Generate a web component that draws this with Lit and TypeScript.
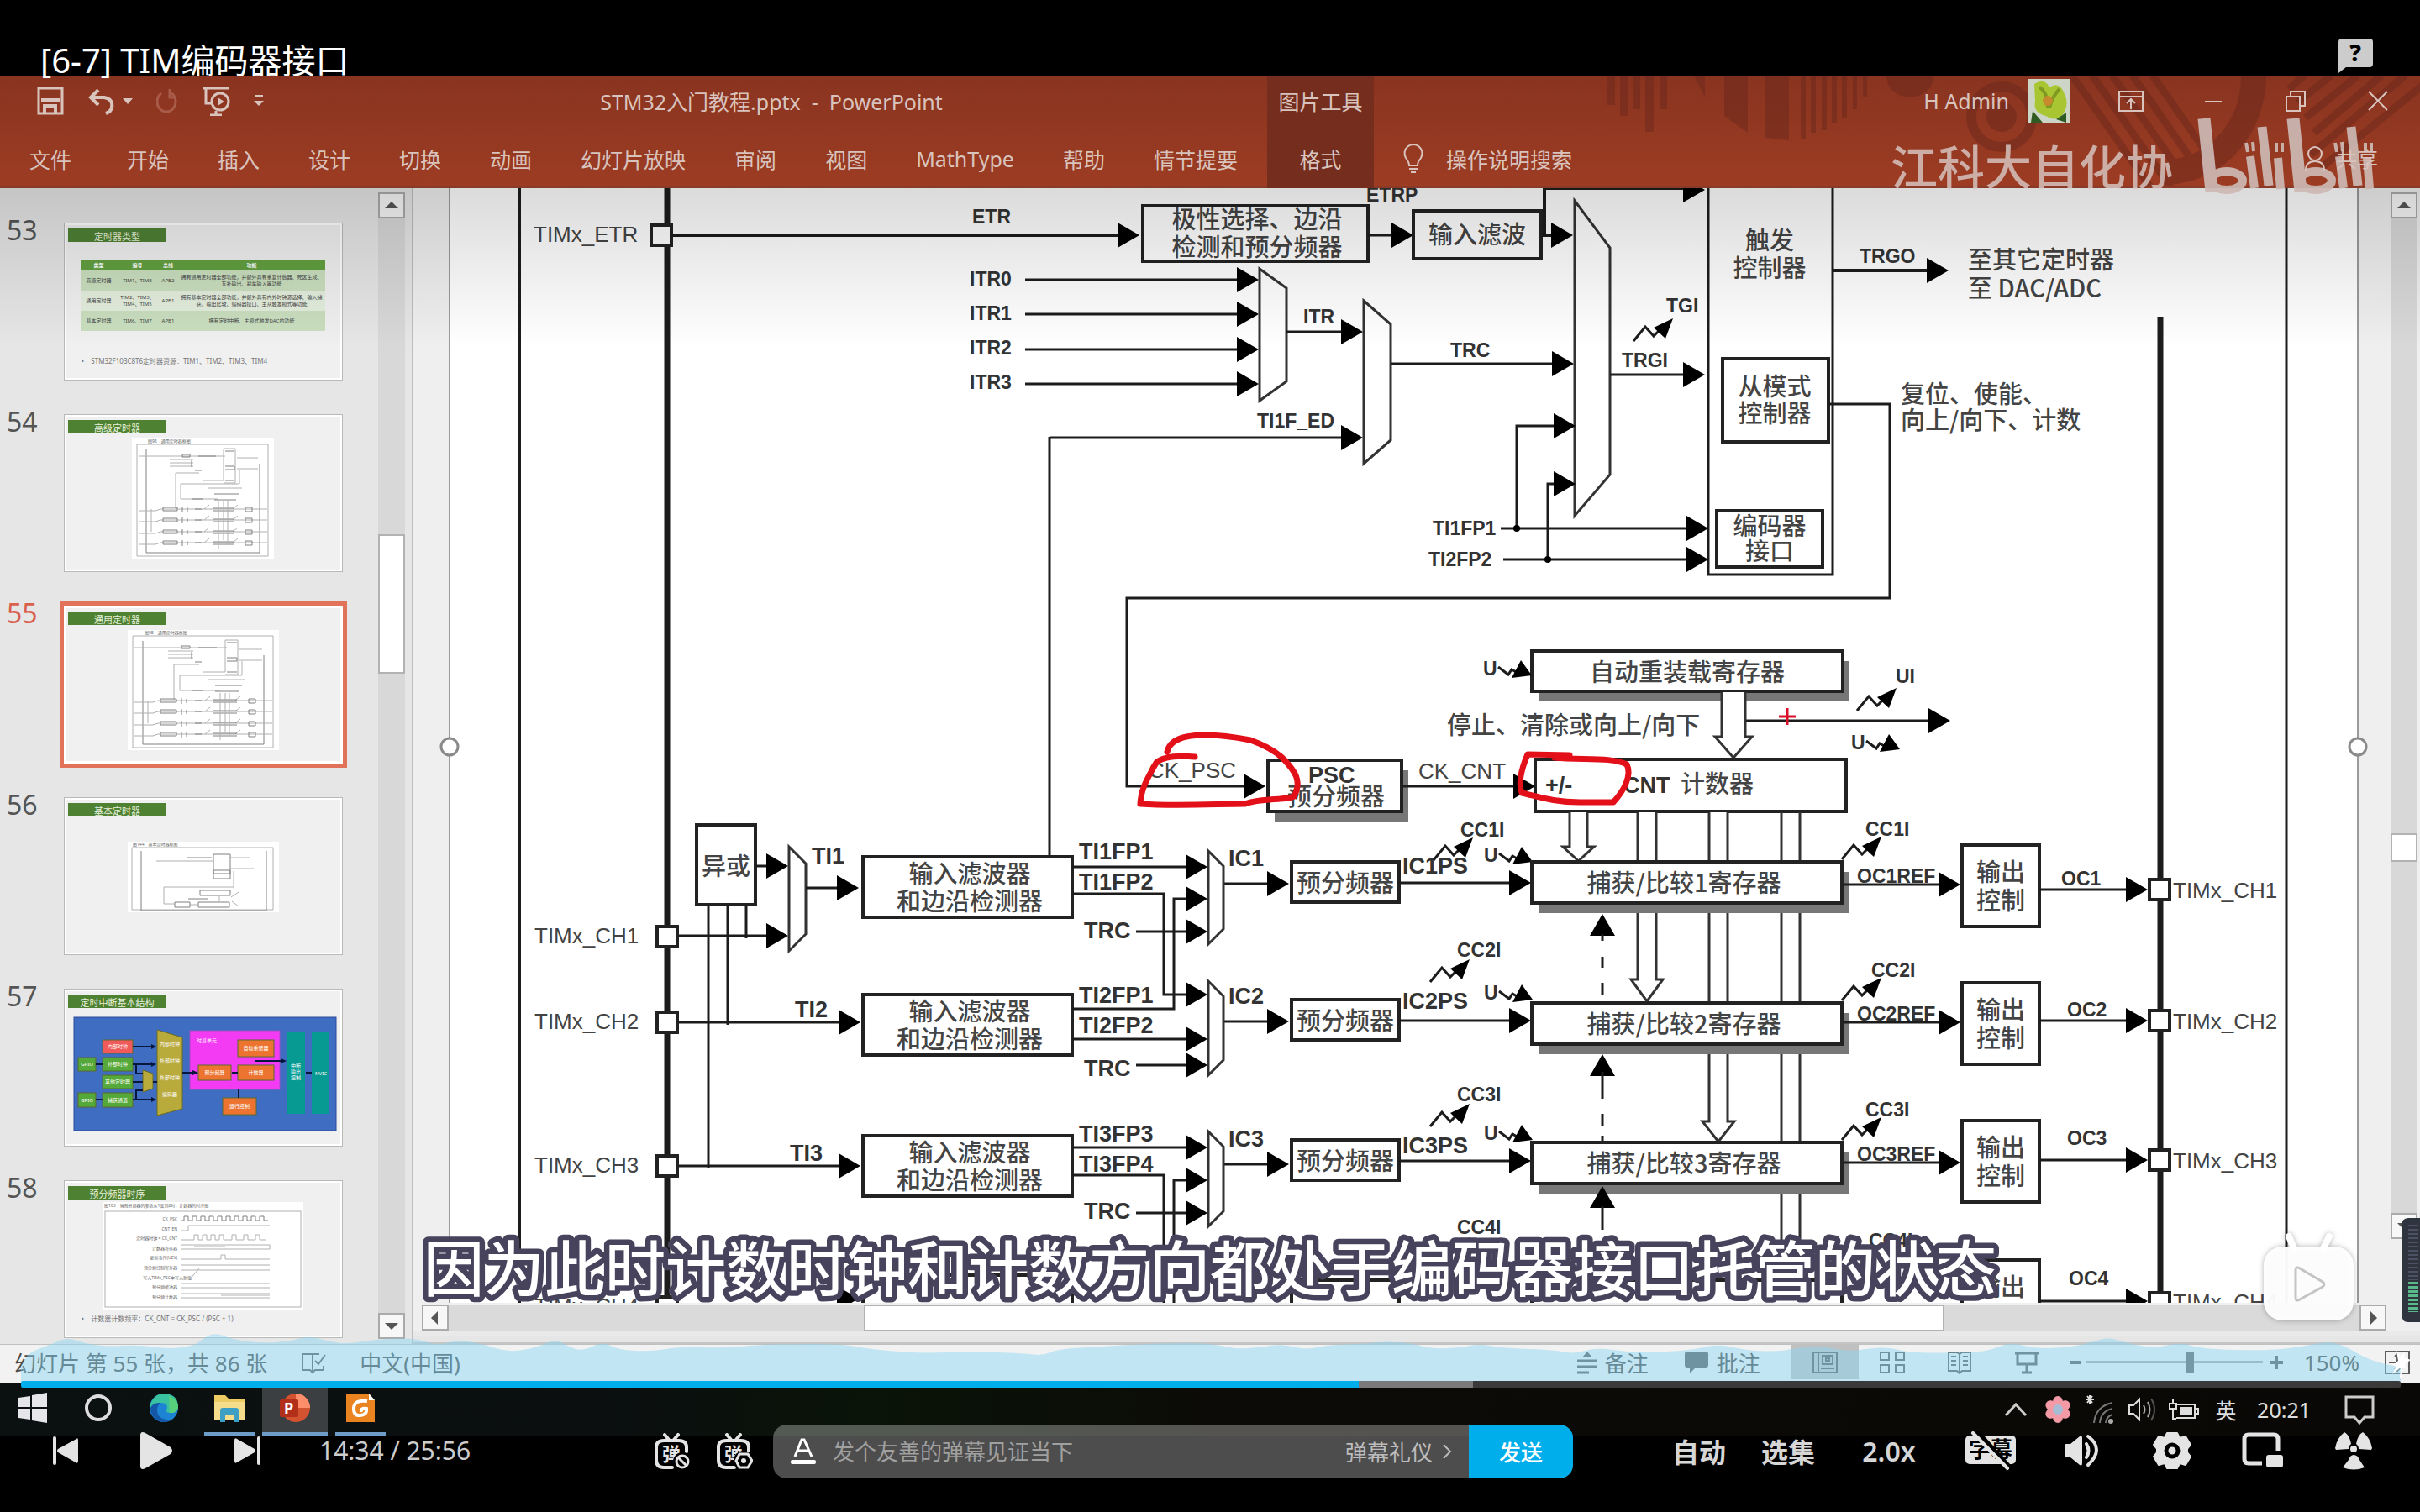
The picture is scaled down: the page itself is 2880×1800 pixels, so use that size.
import { LitElement, html, svg, css } from "lit";
import { customElement } from "lit/decorators.js";

/* ---------- drawing helpers for the timer block diagram ---------- */

const line = (d: string, w = 3) => svg`<path class="ln" d=${d} stroke-width=${w}></path>`;
const head = (x: number, y: number) =>
  svg`<path d=${`M${x} ${y}L${x - 26} ${y - 15}V${y + 15}Z`}></path>`;
const arrow = (x1: number, y: number, x2: number, w = 3) => svg`${line(`M${x1} ${y}H${x2 - 10}`, w)}${head(x2, y)}`;
const box = (x1: number, y1: number, x2: number, y2: number) =>
  svg`<rect class="bx" x=${x1} y=${y1} width=${x2 - x1} height=${y2 - y1}></rect>`;
const shadow = (x1: number, y1: number, x2: number, y2: number) =>
  svg`<rect class="sh" x=${x1 + 8} y=${y1 + 12} width=${x2 - x1} height=${y2 - y1}></rect>${box(x1, y1, x2, y2)}`;
const mux = (x: number, y1: number, y2: number, w: number, cut: number, cut2 = cut) =>
  svg`<path class="mx" d=${`M${x} ${y1}L${x + w} ${y1 + cut}V${y2 - cut2}L${x} ${y2}Z`}></path>`;
const t = (x: number, cy: number, s: string, c = "s") =>
  svg`<text class=${c} x=${x} y=${cy + (c === "b" ? 10 : c === "r" ? 9 : c === "s" ? 8 : 10)}>${s}</text>`;
const cj = (x: number, cy: number, s: string) => svg`<text class="c" x=${x} y=${cy + 10}>${s}</text>`;
const cm = (x: number, cy: number, s: string) => svg`<text class="c mid" x=${x} y=${cy + 10}>${s}</text>`;
const zig = (x: number, y: number) =>
  svg`${line(`M${x} ${y}L${x + 14} ${y - 17}L${x + 24} ${y - 6}L${x + 36} ${y - 18}`)}<path d=${`M${x + 47} ${y - 27}L${x + 24} ${y - 16}L${x + 38} ${y - 3}Z`}></path>`;
const update = (x: number, y: number) =>
  svg`${t(x, y, "U")}${line(`M${x + 18} ${y - 2}L${x + 30} ${y + 7}L${x + 34} ${y + 1}L${x + 46} ${y + 8}`)}<path d=${`M${x + 58} ${y + 8}L${x + 45} ${y - 10}L${x + 34} ${y + 11}Z`}></path>`;
const pin = (x: number, y: number) => svg`<rect class="bx" x=${x - 12} y=${y - 12} width="24" height="24"></rect>`;
const block = (x1: number, x2: number, y1: number, y2: number, tip: number) => {
  const m = (x1 + x2) / 2;
  return svg`<path class="mx" d=${`M${x1} ${y1}V${y2}H${x1 - 8}L${m} ${tip}L${x2 + 8} ${y2}H${x2}V${y1}`}></path>`;
};

const ROWS = [
  { n: 1, y: 1052, out: 1059, box: 1020, fp: ["TI1FP1", "TI1FP2"], fy: 1013, ps: 1026, psT: 1030, reg: 1026, ccl: 988, ox: 1006 },
  { n: 2, y: 1216, out: 1215, box: 1184, fp: ["TI2FP1", "TI2FP2"], fy: 1184, ps: 1190, psT: 1191, reg: 1194, ccl: 1131, ox: 1170 },
  { n: 3, y: 1386, out: 1381, box: 1352, fp: ["TI3FP3", "TI3FP4"], fy: 1349, ps: 1357, psT: 1363, reg: 1360, ccl: 1303, ox: 1334 },
];

const diagram = () => svg`
  <rect x="535" y="200" width="2271" height="1360" fill="#fff"></rect>
  <path d="M535 200V1560M2806 200V1560" stroke="#9b9b9b" stroke-width="2"></path>
  ${line("M618 200V1560", 4)}${line("M2721 200V1560", 3)}
  ${line("M794 200V1560", 7)}${line("M2571 377V1560", 7)}

  ${pin(787, 280)}${t(635, 279, "TIMx_ETR", "r")}${arrow(799, 280, 1356, 4)}${t(1157, 258, "ETR")}
  ${box(1360, 245, 1628, 311)}${cm(1496, 262, "极性选择、边沿")}${cm(1496, 295, "检测和预分频器")}
  ${arrow(1628, 280, 1682)}${t(1626, 232, "ETRP")}
  ${box(1682, 251, 1834, 308)}${cm(1758, 280, "输入滤波")}
  ${line("M1834 280H1860M1838 280V224H2010", 4)}${head(1872, 280)}${head(2029, 226)}
  ${[0, 1, 2, 3].map((i) => svg`${t(1154, 332 + i * 41, `ITR${i}`)}${arrow(1220, 333 + Math.round(i * 41.3), 1498)}`)}
  ${mux(1499, 320, 477, 32, 23)}${arrow(1531, 395, 1622)}${t(1551, 377, "ITR")}
  ${t(1496, 501, "TI1F_ED")}${arrow(1249, 521, 1622)}${line("M1249 520V1020")}
  ${mux(1623, 358, 552, 32, 28)}${arrow(1655, 433, 1873)}${t(1726, 417, "TRC")}
  ${mux(1874, 239, 614, 42, 56, 49)}${arrow(1916, 446, 2029)}${t(1930, 429, "TRGI")}${t(1983, 364, "TGI")}${zig(1944, 406)}
  ${line("M2033 200V684H2181V200")}${cm(2106, 287, "触发")}${cm(2106, 320, "控制器")}
  ${arrow(2181, 322, 2319, 4)}${t(2213, 305, "TRGO")}${cj(2342, 310, "至其它定时器")}${cj(2342, 344, "至 DAC/ADC")}
  ${box(2050, 427, 2176, 526)}${cm(2112, 461, "从模式")}${cm(2112, 493, "控制器")}
  ${line("M2176 481H2249V712H1341V936H1490")}${head(1506, 936)}
  ${cj(2262, 470, "复位、使能、")}${cj(2262, 501, "向上/向下、计数")}
  ${line("M1805 629V507H1860M1842 666V576H1860")}${head(1875, 507)}${head(1875, 576)}
  ${t(1705, 629, "TI1FP1")}${arrow(1786, 629, 2033)}${t(1700, 666, "TI2FP2")}${arrow(1789, 666, 2033)}
  <circle cx="1805" cy="629" r="4"></circle><circle cx="1842" cy="666" r="4"></circle>
  ${box(2043, 608, 2169, 675)}${cm(2106, 627, "编码器")}${cm(2106, 657, "接口")}

  ${shadow(1823, 775, 2193, 823)}${cm(2008, 801, "自动重装载寄存器")}${update(1765, 796)}
  ${block(2049, 2077, 824, 877, 902)}${arrow(2078, 858, 2321)}${t(2256, 805, "UI")}${zig(2210, 846)}${update(2203, 884)}
  ${cj(1722, 864, "停止、清除或向上/向下")}
  ${t(1367, 917, "CK_PSC", "r")}${shadow(1509, 905, 1668, 966)}${t(1557, 922, "PSC", "b")}${cm(1590, 949, "预分频器")}
  ${t(1688, 918, "CK_CNT", "r")}${arrow(1669, 936, 1827)}
  ${box(1827, 904, 2197, 966)}${t(1839, 934, "+/-", "b")}${t(1932, 934, "CNT", "b")}${cj(2000, 934, "计数器")}

  ${block(1868, 1889, 967, 1008, 1025)}
  ${block(1949, 1971, 967, 1166, 1192)}
  ${block(2034, 2056, 967, 1335, 1359)}
  <path class="mx" d="M2120 967V1560M2142 967V1560"></path>

  ${box(829, 982, 899, 1077)}${cm(864, 1032, "异或")}
  ${line("M843 1077V1391M866 1077V1220M888 1077V1117")}
  ${arrow(899, 1031, 938)}${arrow(806, 1114, 938)}${mux(939, 1008, 1132, 20, 20)}${t(966, 1018, "TI1", "b")}${arrow(959, 1057, 1022)}
  ${arrow(806, 1217, 1024)}${t(946, 1201, "TI2", "b")}
  ${arrow(806, 1388, 1024)}${t(940, 1372, "TI3", "b")}
  ${[1115, 1217, 1388, 1556].map((y, i) => svg`${pin(794, y)}${t(636, y - 1, `TIMx_CH${i + 1}`, "r")}`)}

  ${ROWS.map(
    (r) => svg`
      ${box(1027, r.box, 1276, r.box + 72)}${cm(1154, r.box + 21, "输入滤波器")}${cm(1154, r.box + 54, "和边沿检测器")}
      ${t(1284, r.fy, r.fp[0], "b")}${t(1284, r.fy + 36, r.fp[1], "b")}
      ${t(1290, r.y + 55, "TRC", "b")}
      ${t(1462, r.y - 31, `IC${r.n}`, "b")}${arrow(1456, r.y, 1534)}
      ${box(1537, r.ps, 1665, r.ps + 48)}${cm(1601, r.ps + 26, "预分频器")}
      ${t(1669, r.psT, `IC${r.n}PS`, "b")}${arrow(1665, r.ps + 25, 1822)}${update(1766, r.ps - 8)}
      ${t(r.n === 1 ? 1738 : 1734, r.ccl, `CC${r.n}I`)}${zig(r.n === 1 ? 1706 : 1702, r.n === 1 ? 1024 : r.ccl + 38)}
      ${shadow(1823, r.reg, 2192, r.reg + 49)}${cm(2004, r.reg + 26, `捕获/比较${r.n}寄存器`)}
      ${t(r.n === 2 ? 2227 : 2220, r.reg - 39, `CC${r.n}I`)}${zig(2192, r.reg - 3)}
      ${t(2210, r.ps + 17, `OC${r.n}REF`)}${arrow(2193, r.ps + 27, 2333)}
      ${box(2335, r.ox, 2427, r.ox + 97)}${cm(2381, r.ox + 33, "输出")}${cm(2381, r.ox + 67, "控制")}
      ${t(r.n === 1 ? 2453 : 2460, r.n === 3 ? 1355 : r.out - 13, `OC${r.n}`)}${arrow(2427, r.out, 2556)}
      ${pin(2570, r.out)}${t(2586, r.out + 1, `TIMx_CH${r.n}`, "r")}`
  )}
  ${arrow(1276, 1032, 1437)}${line("M1276 1064H1385V1184H1420")}${head(1437, 1184)}
  ${line("M1276 1201H1397V1070H1420")}${head(1437, 1070)}${arrow(1352, 1109, 1437)}
  ${arrow(1276, 1237, 1437)}${arrow(1352, 1268, 1437)}
  ${arrow(1276, 1366, 1437)}${line("M1276 1399H1385V1560M1397 1560V1405H1420")}${head(1437, 1405)}${arrow(1352, 1444, 1437)}
  ${mux(1438, 1013, 1124, 18, 18)}${mux(1438, 1168, 1280, 18, 18)}${mux(1438, 1347, 1460, 18, 18)}
  <path d="M1907 1088L1892 1114H1922ZM1907 1255L1892 1281H1922ZM1907 1412L1892 1438H1922Z"></path>
  ${line("M1907 1112V1120M1907 1139V1152M1907 1170V1184M1907 1276V1308M1907 1326V1340M1907 1352V1360M1907 1436V1464")}

  ${t(1734, 1461, "CC4I")}${zig(1702, 1500)}${t(2224, 1477, "CC4I")}
  ${box(1027, 1518, 1276, 1590)}${box(1537, 1524, 1665, 1572)}${box(1823, 1524, 2192, 1572)}
  ${head(1022, 1546)}${box(2335, 1500, 2427, 1597)}${cm(2381, 1533, "输出")}${t(2462, 1522, "OC4")}${arrow(2427, 1549, 2556)}
  ${pin(2570, 1551)}${t(2586, 1550, "TIMx_CH4", "r")}

  <path class="ink" d="M1422 901C1400 899 1384 901 1376 908C1366 926 1358 938 1357 957C1400 960 1450 957 1482 957C1500 950 1530 953 1540 948C1550 930 1541 918 1528 904C1516 892 1502 886 1488 881C1462 876 1432 873 1412 877C1398 880 1391 886 1389 895"></path>
  <path class="ink" d="M1868 899L1818 898C1812 912 1806 930 1811 944C1830 948 1848 955 1880 955H1920C1934 940 1942 922 1936 910C1918 901 1885 905 1850 902"></path>
  <path d="M2127 843V863M2117 853H2137" stroke="#d8102a" stroke-width="3"></path>
  <circle class="grip" cx="535" cy="889" r="10"></circle><circle class="grip" cx="2806" cy="889" r="10"></circle>
`;

/* ---------- slide thumbnails ---------- */

const miniTimer = (x: number, w: number) => {
  const k = (n: number) => Math.round(x + (n / 180) * w);
  return html`<svg class="mini" viewBox="0 0 332 189" aria-hidden="true">
    <rect x=${x} y="29" width=${w} height="143" fill="#fff"></rect>
    <text class="tiny" x=${k(20)} y="34">图98　通用定时器框图</text>
    <path class="m1" d=${`M${k(6)} 36H${k(173)}V169H${k(6)}Z`}></path>
    <path class="m2" d=${`M${k(18)} 42V165H${k(162)}V59`}></path>
    <path class="m1" d=${`M${k(8)} 50H${k(118)}M${k(48)} 54H${k(78)}M${k(48)} 58H${k(78)}M${k(48)} 62H${k(78)}M${k(55)} 112V70H${k(85)}M${k(133)} 52H${k(160)}M${k(133)} 65H${k(160)}M${k(90)} 79H${k(116)}V41H${k(131)}V82H${k(116)}M${k(136)} 66V83H${k(62)}V101H${k(110)}M${k(96)} 88H${k(140)}`}></path>
    <path class="m2" d=${`M${k(64)} 48H${k(74)}V51H${k(64)}ZM${k(84)} 50H${k(106)}M${k(118)} 44H${k(130)}M${k(76)} 55V63M${k(80)} 67H${k(88)}M${k(118)} 66H${k(130)}V62H${k(118)}M${k(118)} 79H${k(130)}M${k(104)} 95H${k(136)}M${k(76)} 101H${k(90)}M${k(104)} 102H${k(132)}`}></path>
    ${[113, 126, 140, 153].map(
      (y) => svg`<path class="m1" d=${`M${k(8)} ${y + 2}H${k(30)}L${k(36)} ${y}H${k(172)}M${k(92)} ${y}L${k(98)} ${y - 5}M${k(128)} ${y}L${k(134)} ${y - 5}`}></path>
        <path class="m2" d=${`M${k(39)} ${y - 2}H${k(58)}V${y + 2}H${k(39)}ZM${k(64)} ${y - 3}V${y + 4}M${k(70)} ${y - 2}V${y + 3}M${k(80)} ${y}H${k(88)}M${k(102)} ${y - 1}H${k(130)}M${k(102)} ${y + 2}H${k(130)}M${k(144)} ${y - 2}H${k(152)}V${y + 3}H${k(144)}Z`}></path>`
    )}
    <path class="m1" d=${`M${k(110)} 104V160M${k(116)} 104V150M${k(121)} 104V155M${k(24)} 113V140`}></path>
  </svg>`;
};

const miniBasic = () => html`<svg class="mini" viewBox="0 0 332 189" aria-hidden="true">
  <rect x="76" y="53" width="180" height="84" fill="#fff"></rect>
  <text class="tiny" x="82" y="58">图144　基本定时器框图</text>
  <path class="m1" d="M81 60H249V134H81ZM110 76H178M198 72H222M198 85H226M202 88V107H119V127H132"></path>
  <path class="m2" d="M92 64V135H241V64M178 68H198V97H178ZM178 87H198V91H178ZM162 111H198V117H162ZM132 125H150V131H132ZM160 125H197V131H160ZM146 72H176M148 121H172"></path>
  <path class="m1" d="M185 118V124M199 119L208 113M200 124L208 130M150 128H160"></path>
</svg>`;

const chip = (x: number, y: number, w: number, h: number, f: string, s: string) =>
  svg`<rect x=${x} y=${y} width=${w} height=${h} fill=${f} stroke="#5a6a2c" stroke-width="1"></rect><text class="lab" x=${x + w / 2} y=${y + h / 2 + 2}>${s}</text>`;

const miniInterrupt = () => html`<svg class="mini" viewBox="0 0 332 189" aria-hidden="true">
  <rect x="12" y="34" width="312" height="135" fill="#3f6dc2" stroke="#2b4a9a"></rect>
  ${chip(46, 61, 36, 16, "#f05a5a", "内部时钟")}${chip(17, 82, 21, 16, "#55a83a", "GPIO")}${chip(46, 82, 36, 16, "#55a83a", "外部时钟")}
  ${chip(46, 103, 36, 16, "#55a83a", "其他定时器")}${chip(17, 124, 21, 17, "#55a83a", "GPIO")}${chip(46, 124, 36, 17, "#55a83a", "捕获通道")}
  <path d="M94 97L106 101V119L94 123ZM111 49L141 58V143L111 151Z" fill="#b9aa3c" stroke="#6b6a20"></path>
  <text class="lab" x="126" y="68">内部时钟</text><text class="lab" x="126" y="88">外部时钟</text><text class="lab" x="126" y="108">外部时钟</text><text class="lab" x="126" y="128">编码器</text>
  <rect x="150" y="50" width="107" height="70" fill="#f43bf4" stroke="#a04cc0"></rect><text class="lab" x="170" y="64">时基单元</text>
  ${chip(207, 61, 43, 20, "#ec7430", "自动重装器")}${chip(160, 91, 39, 18, "#ec7430", "预分频器")}${chip(207, 91, 43, 18, "#ec7430", "计数器")}${chip(189, 130, 40, 20, "#ec7430", "运行控制")}
  <rect x="265" y="52" width="22" height="97" fill="#069a92"></rect><rect x="295" y="52" width="21" height="97" fill="#069a92"></rect>
  <text class="lab" x="276" y="94">中断</text><text class="lab" x="276" y="101">输出</text><text class="lab" x="276" y="108">控制</text><text class="lab" x="306" y="103">NVIC</text>
  <path d="M82 69H108M38 90H46M82 90H108M86 90V101H94M82 111H94M38 132H46M82 132H108M86 132V121H94M106 111H111M141 100H158M200 100H207M227 86H262M288 100H295M208 120V130" fill="none" stroke="#07163c" stroke-width="2"></path>
  <path d="M110 69L104 66V72ZM110 90L104 87V93ZM110 132L104 129V135ZM160 100L153 97V103ZM265 86L258 83V89Z" fill="#07163c"></path>
</svg>`;

const miniTiming = () => html`<svg class="mini" viewBox="0 0 332 189" aria-hidden="true">
  <rect x="47" y="26" width="238" height="128" fill="#fff"></rect>
  <text class="tiny" x="48" y="32">图103　当预分频器的参数从1变到2时，计数器的时序图</text>
  <rect class="m1" x="49" y="37" width="233" height="114"></rect>
  ${["CK_PSC", "CNT_EN", "定时器时钟 = CK_CNT", "计数器寄存器", "更新事件(UEV)", "预分频控制寄存器", "写入TIMx_PSC中写入新值", "预分频缓冲器", "预分频计数器"].map(
    (s, i) => svg`<text class="tiny end" x=${i === 6 ? 152 : 135} y=${48 + Math.round(i * 11.6)}>${s}</text>`
  )}
  <path class="m2" d="M139 48h4v-5h5v5h5v-5h5v5h5v-5h5v5h5v-5h5v5h5v-5h5v5h5v-5h5v5h5v-5h5v5h5v-5h5v5h5v-5h5v5h5v-5h5v5h5"></path>
  <path class="m1" d="M139 60H148V54H245M139 71H155v-6h5v6h5v-6h5v6h5v-6h5v6h5v-6h5v6h10v-6h5v6h9v-6h5v6h9v-6h5v6h8M139 77H245V82H139M155 79H192M139 94H187V89H192V94H245M139 101H245M139 107H245M139 123H245M139 128H245M139 135H245M139 140H245M187 137H245M150 118L161 105"></path>
</svg>`;

const tableSlide = () => html`<div class="slide-table">
  <table>
    <thead><tr><th>类型</th><th>编号</th><th>总线</th><th>功能</th></tr></thead>
    <tbody>
      <tr><td>高级定时器</td><td>TIM1、TIM8</td><td>APB2</td><td>拥有通用定时器全部功能，并额外具有重复计数器、死区生成、互补输出、刹车输入等功能</td></tr>
      <tr><td>通用定时器</td><td>TIM2、TIM3、TIM4、TIM5</td><td>APB1</td><td>拥有基本定时器全部功能，并额外具有内外时钟源选择、输入捕获、输出比较、编码器接口、主从触发模式等功能</td></tr>
      <tr><td>基本定时器</td><td>TIM6、TIM7</td><td>APB1</td><td>拥有定时中断、主模式触发DAC的功能</td></tr>
    </tbody>
  </table>
</div>`;

const SLIDES = [
  { n: 53, title: "定时器类型", body: tableSlide, note: "STM32F103C8T6定时器资源：TIM1、TIM2、TIM3、TIM4" },
  { n: 54, title: "高级定时器", body: () => miniTimer(81, 169), note: "" },
  { n: 55, title: "通用定时器", body: () => miniTimer(76, 180), note: "" },
  { n: 56, title: "基本定时器", body: miniBasic, note: "" },
  { n: 57, title: "定时中断基本结构", body: miniInterrupt, note: "" },
  { n: 58, title: "预分频器时序", body: miniTiming, note: "计数器计数频率：CK_CNT = CK_PSC / (PSC + 1)" },
];

/* ---------- heat curve above the progress bar ---------- */

const HEAT = [
  25, 1626, 32, 1612, 48, 1605, 62, 1600, 80, 1592, 103, 1600, 130, 1603, 165, 1601, 200, 1606, 232, 1602, 245, 1591, 257, 1587, 280, 1595, 310, 1599,
  345, 1597, 368, 1590, 390, 1597, 415, 1600, 450, 1594, 495, 1593, 520, 1602, 545, 1595, 575, 1600, 605, 1610, 640, 1604, 660, 1594, 675, 1602,
  692, 1609, 718, 1597, 735, 1607, 775, 1609, 810, 1603, 860, 1605, 905, 1601, 940, 1600, 1000, 1600, 1030, 1605, 1055, 1608, 1100, 1611, 1150, 1609,
  1220, 1611, 1240, 1614, 1260, 1606, 1310, 1603, 1380, 1599, 1440, 1599, 1470, 1606, 1500, 1604, 1525, 1600, 1555, 1607, 1580, 1601, 1620, 1600,
  1650, 1597, 1680, 1599, 1705, 1606, 1740, 1604, 1760, 1600, 1790, 1605, 1850, 1607, 1873, 1612, 1900, 1604, 1940, 1610, 1985, 1609, 2015, 1607,
  2045, 1600, 2080, 1608, 2120, 1609, 2160, 1601, 2200, 1609, 2225, 1605, 2250, 1604, 2275, 1611, 2350, 1610, 2370, 1607, 2392, 1598, 2425, 1606,
  2470, 1603, 2495, 1596, 2510, 1592, 2535, 1600, 2565, 1605, 2595, 1598, 2620, 1606, 2700, 1608, 2740, 1603, 2770, 1597, 2790, 1602, 2810, 1614,
  2830, 1622, 2857, 1628,
];
const heatPath = () => {
  let d = `M25 1644V${HEAT[1]}`;
  for (let i = 2; i < HEAT.length - 2; i += 2) {
    d += `Q${HEAT[i]} ${HEAT[i + 1]} ${(HEAT[i] + HEAT[i + 2]) / 2} ${(HEAT[i + 1] + HEAT[i + 3]) / 2}`;
  }
  return d + "L2857 1628V1644Z";
};

const icon = (w: number, h: number, body: unknown, cls = "") =>
  html`<svg class=${cls} width=${w} height=${h} viewBox=${`0 0 ${w} ${h}`} aria-hidden="true">${body}</svg>`;

const TABS = ["开始", "插入", "设计", "切换", "动画", "幻灯片放映", "审阅", "视图", "MathType", "帮助", "情节提要"];

@customElement("app-root")
export class AppRoot extends LitElement {
  static styles = css`
    :host { display: block; font-family: "Noto Sans", "Noto Sans CJK SC", sans-serif; }
    * { box-sizing: border-box; }
    button { font: inherit; color: inherit; background: none; border: 0; padding: 0; margin: 0; display: flex; align-items: center; justify-content: center; white-space: nowrap; }
    svg { display: block; flex: none; }
    .player { position: relative; display: flex; flex-direction: column; height: 100vh; overflow: hidden; background: #000; }

    .top { height: 90px; flex: none; display: flex; justify-content: space-between; align-items: flex-start; padding: 44px 56px 0 48px; color: #fff; position: relative; z-index: 2; }
    .top h1 { margin: 0; font: 400 40px/56px "Noto Sans", "Noto Sans CJK SC", sans-serif; }

    .ribbon { position: relative; flex: none; height: 134px; display: grid; grid-template-columns: auto 127px 1fr; background: linear-gradient(#893420, #9d3c23); color: #d9c3bd; font-size: 25px; border-bottom: 2px solid #8a3a26; }
    .decor { position: absolute; right: 0; top: 0; }
    .col { display: flex; flex-direction: column; position: relative; }
    .bar { height: 60px; display: flex; align-items: center; }
    .tabs { height: 78px; display: flex; align-items: center; gap: 58px; }
    .quick { display: flex; align-items: center; gap: 28px; padding-left: 44px; }
    .undo { gap: 8px; }
    .doc { flex: 1; text-align: center; white-space: pre; padding-left: 14px; }
    .file { margin-right: 8px; }
    .ribbon .home { padding: 0 35px; }
    .ctx { background: #752d1e; align-items: center; }
    .right .bar { justify-content: flex-end; padding-right: 34px; gap: 66px; }
    .right .tabs { padding-left: 34px; gap: 26px; }
    .user { display: flex; align-items: center; gap: 22px; margin-right: -10px; }
    .mark { position: absolute; right: 46px; top: 48px; display: flex; align-items: flex-end; gap: 28px; height: 96px; color: rgba(218, 204, 200, .8); z-index: 3; }
    .mark span { font: 500 56px/68px "Noto Sans CJK SC", sans-serif; padding-bottom: 4px; }
    .share { position: absolute; right: 50px; top: 82px; display: flex; gap: 12px; align-items: center; line-height: 34px; z-index: 4; }

    .work { position: relative; flex: 1; min-height: 0; display: grid; grid-template-columns: 492px 1fr; background: #e6e6e6; }
    .veil { position: absolute; inset: 0 0 auto 0; height: 190px; background: linear-gradient(rgba(0, 0, 0, .14), rgba(0, 0, 0, 0)); pointer-events: none; }
    .pane { display: flex; min-height: 0; overflow: hidden; border-right: 2px solid #bdbdbd; padding-right: 8px; }
    .list { flex: 1; list-style: none; margin: 0; padding: 41px 0 0; display: flex; flex-direction: column; gap: 39px; overflow: hidden; }
    .list li { display: flex; flex: none; }
    .num { width: 76px; padding-left: 8px; font-size: 32px; line-height: 18px; color: #555; }
    .thumb { position: relative; display: block; width: 332px; height: 188px; margin-bottom: 1px; background: #f0f0f0; border: 1px solid #b9b9b9; box-shadow: inset 0 0 0 2px #fff; overflow: hidden; text-align: left; }
    .on .num { color: #d9604c; }
    .on .thumb { outline: 5px solid #e2735b; border-color: #fff; overflow: hidden; }
    .cap { position: absolute; left: 4px; top: 6px; width: 117px; height: 16px; background: #4f8133; color: #e6f0da; font-size: 11px; line-height: 20px; text-align: center; overflow: hidden; }
    .mini { position: absolute; left: -1px; top: -1px; width: 332px; height: 189px; }
    .note { position: absolute; left: 20px; bottom: 16px; font-size: 8px; line-height: 12px; color: #777; white-space: pre; }
    .slide-table { padding: 43px 20px 0 19px; }
    table { width: 100%; border-collapse: collapse; table-layout: fixed; font-size: 6px; line-height: 8px; color: #444; text-align: center; }
    th { height: 13px; background: #62a03f; color: #fff; padding: 0; }
    th:nth-child(1) { width: 43px; } th:nth-child(2) { width: 49px; } th:nth-child(3) { width: 24px; }
    td { height: 24px; padding: 0 3px; background: #cadfbf; }
    tr:nth-child(2) td { background: #e4eedd; }
    .tiny { font-size: 5px; fill: #666; } .end { text-anchor: end; }
    .lab { font-size: 6px; fill: #fff; text-anchor: middle; }
    .m1 { fill: none; stroke: #b0b0b0; stroke-width: 1; } .m2 { fill: none; stroke: #808080; stroke-width: 1; }

    .vs { width: 32px; flex: none; display: flex; flex-direction: column; background: #d8d8d8; margin: 5px 0 6px; }
    .key { width: 32px; height: 31px; background: #f7f7f7; border: 2px solid #aaa; flex: none; }
    .knob { background: #fff; border: 2px solid #b2b2b2; flex: none; }
    .pane .knob { height: 166px; margin: 376px 0 auto; }
    .edit { display: grid; grid-template-columns: 1fr 36px; grid-template-rows: 1fr 34px 15px; min-height: 0; min-width: 0; background: #efefef; }
    .canvas { overflow: hidden; min-height: 0; }
    .canvas svg { width: 100%; height: 100%; }
    .edit .vs { margin: 5px 0 76px 1px; }
    .edit .vs .knob { height: 34px; margin: 732px 0 auto; }
    .hs { display: flex; background: #dadada; margin: 2px 4px 0 10px; }
    .hs .knob { flex: 0 0 55%; height: 32px; margin: 0 auto 0 494px; }
    .foot { grid-column: 1 / 3; border-bottom: 2px solid #c5c5c5; border-top: 6px solid #e9e9e9; background: #e6e6e6; }
    .c { font: 500 29px "Noto Sans CJK SC", sans-serif; fill: #444; } .mid { text-anchor: middle; }
    .s { font: 700 23px "Liberation Sans", sans-serif; fill: #333; }
    .b { font: 700 27px "Liberation Sans", sans-serif; fill: #333; }
    .r { font: 400 26px "Liberation Sans", sans-serif; fill: #444; }
    .ln { fill: none; stroke: #1c1c1c; }
    .bx { fill: #fff; stroke: #222; stroke-width: 4; } .sh { fill: #777; } .mx { fill: #fff; stroke: #333; stroke-width: 3; }
    .ink { fill: none; stroke: #e3101a; stroke-width: 7; stroke-linecap: round; stroke-linejoin: round; }
    .grip { fill: #fff; stroke: #8a8a8a; stroke-width: 3; }
    .level { position: absolute; right: 0; top: 1226px; }

    .status { flex: none; height: 46px; display: flex; align-items: center; background: #f2f2f2; border-top: 1px solid #c0c0c0; padding: 0 12px 4px 17px; color: #4a4a4a; font-size: 26px; white-space: nowrap; }
    .status .lang { margin: 0 auto 0 40px; }
    .status .proof { margin-left: 40px; }
    .status button { height: 43px; gap: 9px; }
    .status .cmt { margin: 0 37px 0 42px; }
    .status .view { width: 80px; } .status .sel { background: #c0c0c0; height: 41px; }
    .status .out { margin-left: 10px; }
    .status .zoom { appearance: none; width: 210px; height: 26px; margin: 0 8px 0 5px; background: linear-gradient(#aaa, #aaa) center / 100% 3px no-repeat; }
    .zoom::-webkit-slider-thumb { appearance: none; width: 10px; height: 24px; background: #666; }
    .status .pct { margin: 0 30px 0 25px; }

    .task { flex: none; height: 154px; padding-bottom: 90px; display: flex; align-items: stretch; background: linear-gradient(90deg, #0b1011, #0b0f10 25%, #0a1408 36%, #0c0b07 50%, #090806) top / 100% 64px no-repeat, #000; color: #ddd; font-size: 25px; }
    .app { width: 78px; border-bottom: 5px solid transparent; }
    .run { border-color: transparent; background: linear-gradient(#6d9cc6, #6d9cc6) center 59px / 60px 5px no-repeat; }
    .now { background: linear-gradient(#6d9cc6, #6d9cc6) center 59px / 78px 5px no-repeat, #3b3f41; }
    .tray { margin-left: auto; padding-right: 54px; display: flex; align-items: center; gap: 14px; }
    .tray button { width: 36px; } .tray .clock { width: auto; padding: 0 26px 0 5px; }

    .heat { position: absolute; left: 25px; right: 23px; bottom: 156px; height: 60px; }
    .heat svg { width: 100%; height: 100%; }
    .seek { position: absolute; left: 25px; right: 23px; bottom: 148px; }
    .seek input { appearance: none; display: block; width: 100%; height: 8px; margin: 0; border-radius: 2px; background: linear-gradient(90deg, #00aeec 56.2%, #7a7a7a 56.2% 61%, #3a3a3a 61%); }
    .seek input::-webkit-slider-thumb { appearance: none; width: 1px; height: 1px; }
    .buddy { position: absolute; right: 8px; bottom: 158px; }

    .ctl { position: absolute; left: 0; right: 0; bottom: 0; height: 104px; padding: 0 46px 40px 56px; display: flex; align-items: center; color: #e4e4e4; }
    .left { flex: 1; display: flex; align-items: center; gap: 64px; }
    .left button { width: 44px; height: 60px; padding-bottom: 2px; }
    .time { font-size: 30px; line-height: 40px; color: #ccc; white-space: nowrap; padding-bottom: 2px; }
    .mid-group { flex: 0 1 1094px; display: flex; align-items: center; gap: 30px; }
    .send-box { flex: 1; display: flex; align-items: center; height: 64px; border-radius: 16px; background: rgba(255, 255, 255, .3); overflow: hidden; margin-left: -6px; font-size: 26px; }
    .fmt { width: 30px; margin: 0 20px 0 21px; }
    .send-box input { flex: 1; min-width: 0; height: 64px; background: none; border: 0; padding: 0; font: inherit; color: #fff; outline: 0; }
    .send-box input::placeholder { color: #a0a0a0; opacity: 1; }
    .rule { color: #bcbcbc; gap: 11px; margin-right: 20px; }
    .send { width: 124px; height: 64px; background: #00aeec; color: #fff; font-weight: 500; }
    .rgt { display: flex; align-items: center; gap: 42px; padding: 0 0 2px 118px; font-size: 32px; font-weight: 600; color: #d6d6d6; }
    .rgt .tx { width: 64px; } .rgt .sp { width: 92px; } .rgt .ic { width: 66px; }
    .glyph { font: 700 22px "Noto Sans CJK SC", sans-serif; fill: #e4e4e4; text-anchor: middle; }
    .inv { font: 700 26px "Noto Sans CJK SC", sans-serif; fill: #000; text-anchor: middle; }

    .sub { position: absolute; left: 0; right: 0; bottom: 233px; display: flex; justify-content: center; }
    .sub svg { width: 1920px; height: 110px; }
    .line { font: 500 72px "Noto Sans CJK SC", sans-serif; text-anchor: middle; fill: #fff; stroke: #47435c; stroke-width: 13px; stroke-linejoin: round; paint-order: stroke fill; }
    .float { position: absolute; right: 74px; bottom: 222px; filter: drop-shadow(0 0 3px rgba(0, 0, 0, .3)); }
  `;

  private win(title: string, d: string) {
    return html`<button aria-label=${title}>${icon(32, 32, svg`<path d=${d} fill="none" stroke="#d9c3bd" stroke-width="2"></path>`)}</button>`;
  }

  private renderRibbon() {
    const s = "#d9c3bd";
    return html`<div class="ribbon">
      <svg class="decor" width="980" height="132" viewBox="1900 90 980 132" aria-hidden="true">
        <g fill="#6b281c" opacity=".5">
          <path d="M1913 90h9v35h-9zM1928 90h10v48h-10zM1944 90h8v40h-8zM1958 90h10v67h-10zM1975 90h9v40h-9zM2016 90h13v26zM2052 90h28v68l-28-20zM2101 90h28v77l-28-3zM2143 90h6v75h-6zM2155 90h6v68h-6zM2168 90h6v65h-6zM2180 90h6v56h-6zM2192 90h6v50h-6zM2205 90h5v40h-5zM2217 90h5v26h-5z"></path>
          <path d="M2245 90h56c0 34-56 34-56 0z"></path><circle cx="2382" cy="139" r="18"></circle>
        </g>
        <g fill="none" stroke="#6b281c" opacity=".5">
          <circle cx="2382" cy="139" r="36" stroke-width="12"></circle>
          <path d="M2466 90L2560 224M2490 90L2584 224M2514 90L2600 212M2538 90L2612 196M2562 90L2622 176" stroke-width="9"></path>
          <path d="M2682 90C2682 150 2640 202 2580 205" stroke-width="30"></path>
          <path d="M2742 90L2724 106M2774 90L2734 122M2806 90L2744 140M2834 90L2754 158M2862 90L2750 184M2890 96L2762 200" stroke-width="9"></path>
        </g>
      </svg>
      <div class="col">
        <div class="bar">
          <div class="quick">
            <button aria-label="保存">${icon(32, 34, svg`<path d="M2 2H30V32H2Z" fill="none" stroke=${s} stroke-width="3"></path><path d="M5 16H27M9 32V23H22V32" fill="none" stroke=${s} stroke-width="4"></path>`)}</button>
            <button class="undo" aria-label="撤消">${icon(34, 34, svg`<path d="M13 4L4 13L13 22M5 13H20Q31 15 29 25Q28 30 22 32" fill="none" stroke=${s} stroke-width="4"></path>`)}${icon(12, 8, svg`<path d="M0 1H12L6 8Z" fill=${s}></path>`)}</button>
            <button aria-label="重做">${icon(26, 32, svg`<path d="M6 7A11 12 0 1 0 18 7M16 2V12H24" fill="none" stroke="#a85b49" stroke-width="3"></path>`)}</button>
            <button aria-label="从头放映">${icon(34, 36, svg`<path d="M1 3H33M5 3V21H14M17 30V36M10 35H24" fill="none" stroke=${s} stroke-width="3"></path><circle cx="22" cy="19" r="10" fill="none" stroke=${s} stroke-width="3"></circle><path d="M19 14L27 19L19 24Z" fill=${s}></path>`)}</button>
            <button aria-label="自定义">${icon(12, 18, svg`<path d="M1 3H11" stroke=${s} stroke-width="2"></path><path d="M0 9H12L6 15Z" fill=${s}></path>`)}</button>
          </div>
          <div class="doc">STM32入门教程.pptx  -  PowerPoint</div>
        </div>
        <div class="tabs home"><button class="file">文件</button>${TABS.map((x) => html`<button>${x}</button>`)}</div>
      </div>
      <div class="col ctx"><div class="bar">图片工具</div><div class="tabs"><button>格式</button></div></div>
      <div class="col right">
        <div class="bar">
          <div class="user">H Admin
            <svg width="51" height="52" viewBox="0 0 51 52" aria-hidden="true"><rect width="51" height="52" fill="#cdd6c6"></rect><path d="M8 6Q20 -2 26 10Q38 2 44 18Q50 30 42 42Q34 52 22 44Q6 40 9 26Z" fill="#a9c632"></path><path d="M14 10Q24 16 24 34M38 12Q30 20 26 34" stroke="#7f9a20" stroke-width="4" fill="none"></path><circle cx="24" cy="26" r="6" fill="#c78a2c"></circle><path d="M6 38L18 52H4ZM34 48L46 40V52Z" fill="#2f5a22"></path></svg>
          </div>
          ${this.win("功能区显示选项", "M2 5H30V28H2ZM2 11H30M16 26V15M11 19L16 14L21 19")}
          ${this.win("最小化", "M6 17H26")}
          ${this.win("还原", "M5 11H21V28H5ZM10 11V5H27V22H21")}
          ${this.win("关闭", "M5 5L27 27M27 5L5 27")}
        </div>
        <div class="tabs">${icon(26, 36, svg`<path d="M8 26Q8 22 4 17A10.500 10.500 0 1 1 22 17Q18 22 18 26ZM8 30H18M10 34H16" fill="none" stroke=${s} stroke-width="2"></path>`)}<button>操作说明搜索</button></div>
      </div>
      <button class="share">${icon(26, 30, svg`<circle cx="13" cy="9" r="8" fill="none" stroke=${s} stroke-width="2"></circle><path d="M2 29Q2 18 13 18Q24 18 24 29" fill="none" stroke=${s} stroke-width="2"></path>`)}共享</button>
      <div class="mark"><span>江科大自化协</span>
        <svg width="220" height="96" viewBox="0 0 220 96" role="img" aria-label="bilibili">
          <g stroke="#cdb9b4" fill="none" opacity=".92">
            ${[0, 106].map(
              (x) => svg`<g transform=${`translate(${x} 0)`}>
                <line x1="9" y1="3" x2="18" y2="90" stroke-width="15"></line><ellipse cx="36" cy="77" rx="19" ry="11" stroke-width="10"></ellipse>
                <line x1="64" y1="48" x2="69" y2="86" stroke-width="10"></line><line x1="78" y1="13" x2="86" y2="83" stroke-width="11"></line><line x1="97" y1="50" x2="100" y2="87" stroke-width="10"></line>
                <path d="M59 32L61 43M67 31L68 42M95 32V43M102 32V43" stroke-width="4"></path>
              </g>`
            )}
          </g>
        </svg>
      </div>
    </div>`;
  }

  private renderWork() {
    const up = icon(28, 27, svg`<path d="M6 17L14 9L22 17Z" fill="#555"></path>`);
    const down = icon(28, 27, svg`<path d="M6 10L14 18L22 10Z" fill="#555"></path>`);
    return html`<div class="work">
      <div class="pane">
        <ol class="list">
          ${SLIDES.map(
            (s) => html`<li class=${s.n === 55 ? "on" : ""}>
              <span class="num">${s.n}</span>
              <div class="thumb">
                ${s.body()}<div class="cap">${s.title}</div>
                ${s.note ? html`<div class="note">•    ${s.note}</div>` : ""}
              </div>
            </li>`
          )}
        </ol>
        <div class="vs"><button class="key" aria-label="向上滚动">${up}</button><div class="knob"></div><button class="key" aria-label="向下滚动">${down}</button></div>
      </div>
      <div class="edit">
        <div class="canvas"><svg viewBox="492 224 2352 1327" preserveAspectRatio="xMidYMin slice">${diagram()}</svg></div>
        <div class="vs"><button class="key" aria-label="上移">${up}</button><div class="knob"></div><button class="key" aria-label="下移">${down}</button></div>
        <div class="hs"><button class="key" aria-label="左移">${icon(28, 27, svg`<path d="M17 6L9 14L17 22Z" fill="#555"></path>`)}</button><div class="knob"></div><button class="key" aria-label="右移">${icon(28, 27, svg`<path d="M11 6L19 14L11 22Z" fill="#555"></path>`)}</button></div>
        <div></div>
        <div class="foot"></div>
      </div>
      <div class="veil"></div>
      <svg class="level" width="24" height="124" viewBox="0 0 24 124" aria-hidden="true"><path d="M24 0H10Q2 0 2 10V114Q2 124 10 124H24Z" fill="#30343f"></path><path d="M16 8V74" stroke="#4a5264" stroke-width="12" stroke-dasharray="2 3"></path><path d="M16 76V112" stroke="#58b98a" stroke-width="12" stroke-dasharray="3 2"></path></svg>
    </div>`;
  }

  private renderStatus() {
    const g = "#5c5c5c";
    const o = (d: string, w = 2) => svg`<path d=${d} fill="none" stroke=${g} stroke-width=${w}></path>`;
    return html`<div class="status">
      <span>幻灯片 第 55 张，共 86 张</span>
      <button class="proof" aria-label="拼写检查">${icon(30, 28, o("M14 4V25M14 4H2V23H11L14 26L17 23H27V18M14 4H22M17 12L21 16L29 5"))}</button>
      <span class="lang">中文(中国)</span>
      <button>${icon(24, 28, svg`<path d="M6 8L12 1L18 8Z" fill=${g}></path>${o("M0 12H24M0 19H24M0 26H14", 3)}`)}备注</button>
      <button class="cmt">${icon(30, 28, svg`<path d="M4 1H26Q29 1 29 4V17Q29 20 26 20H14L7 27V20H4Q1 20 1 17V4Q1 1 4 1Z" fill=${g}></path>`)}批注</button>
      <button class="view sel" aria-label="普通视图">${icon(30, 28, o("M1 2H29V26H1ZM7 2V26M12 6H24V16H12ZM16 9H20V12H16ZM10 21H26"))}</button>
      <button class="view" aria-label="幻灯片浏览">${icon(30, 28, o("M1 2H11V11H1ZM19 2H29V11H19ZM1 17H11V26H1ZM19 17H29V26H19Z"))}</button>
      <button class="view" aria-label="阅读视图">${icon(28, 28, o("M14 4V27M14 4L11 2H1V24H11L14 27L17 24H27V2H17ZM4 7H10M4 12H10M4 17H10M18 7H24M18 12H24M18 17H24"))}</button>
      <button class="view" aria-label="放映">${icon(28, 28, o("M0 3H28M3 3V16H25V3M14 16V26M8 26H20", 3))}</button>
      <button class="out" aria-label="缩小">${icon(16, 16, o("M1 8H14", 4))}</button>
      <input class="zoom" type="range" min="0" max="100" value="59" aria-label="缩放" />
      <button aria-label="放大">${icon(16, 16, o("M0 8H16M8 0V16", 4))}</button>
      <span class="pct">150%</span>
      <button aria-label="适应窗口">${icon(30, 28, o("M1 1H29V27H1ZM15 4V24M5 14H25M12 7L15 4L18 7M12 21L15 24L18 21"))}</button>
    </div>`;
  }

  private renderTask() {
    const w = (d: string, c = "#ddd", sw = 2) => svg`<path d=${d} fill="none" stroke=${c} stroke-width=${sw}></path>`;
    return html`<div class="task">
      <button class="app" aria-label="开始">${icon(36, 36, svg`<path d="M1 6L15 4V17H1ZM17 3L35 0V17H17ZM1 19H15V32L1 30ZM17 19H35V36L17 33Z" fill="#e6e6ea"></path>`)}</button>
      <button class="app" aria-label="Cortana">${icon(34, 34, svg`<circle cx="17" cy="17" r="14" fill="none" stroke="#ddd" stroke-width="4"></circle>`)}</button>
      <button class="app" aria-label="Edge">${icon(36, 36, svg`<circle cx="18" cy="18" r="17" fill="#1d84d4"></circle><path d="M2 14Q6 1 19 1Q35 2 35 17Q34 25 24 24Q19 23 22 18Q22 12 15 12Q6 12 2 20Z" fill="#38c2a0"></path><path d="M2 18Q5 11 14 12Q8 17 11 26Q15 33 26 32Q18 38 9 32Q2 27 2 18Z" fill="#1456a8"></path><path d="M24 4Q36 9 35 18Q33 25 25 24Z" fill="#66d46a" opacity=".7"></path>`)}</button>
      <button class="app run" aria-label="文件资源管理器">${icon(38, 34, svg`<path d="M1 2H14L18 6H37V32H1Z" fill="#eccb62"></path><path d="M1 10H37V32H1Z" fill="#f6dd8b"></path><path d="M8 34V20Q8 17 11 17H27Q30 17 30 20V34H24V25H14V34Z" fill="#3e9fc4"></path>`)}</button>
      <button class="app now" aria-label="PowerPoint">${icon(38, 36, svg`<circle cx="20" cy="18" r="17" fill="#d35230"></circle><path d="M20 1A17 17 0 0 1 37 18H20Z" fill="#ff8f6b"></path><rect x="1" y="8" width="22" height="21" rx="2" fill="#b2301a"></rect><text x="6" y="25" font-size="18" font-weight="700" fill="#fff">P</text>`)}</button>
      <button class="app run" aria-label="Foxit">${icon(36, 36, svg`<path d="M1 1H28L35 9V35H1Z" fill="#ea8420"></path><path d="M28 1V9H35Z" fill="#fff"></path><path d="M26 10Q10 8 10 19Q10 28 18 27Q26 26 25 19Q18 18 19 23" fill="none" stroke="#fff" stroke-width="4"></path>`)}</button>
      <div class="tray">
        <button aria-label="显示隐藏的图标">${icon(30, 20, w("M3 17L15 4L27 17", "#ccc", 3))}</button>
        <button aria-label="花瓣">${icon(32, 32, svg`${[0, 60, 120, 180, 240, 300].map((a) => svg`<ellipse cx="16" cy="7" rx="6" ry="7" fill="#f39aa6" transform=${`rotate(${a} 16 16)`}></ellipse>`)}<circle cx="16" cy="16" r="6" fill="#a7bdd6"></circle>`)}</button>
        <button aria-label="网络">${icon(34, 36, svg`${w("M10 34Q12 14 32 10M17 34Q18 20 32 17M24 34Q25 26 32 24", "#777", 2)}<circle cx="30" cy="32" r="3" fill="#aaa"></circle>${w("M5 1V11M0 6H10M2 2L8 10M8 2L2 10", "#ddd", 2)}`)}</button>
        <button aria-label="音量">${icon(34, 30, svg`${w("M2 10H7L14 3V27L7 20H2Z")}${w("M19 10Q22 15 19 20M24 6Q29 15 24 24", "#aaa")}${w("M28 2Q36 15 28 28", "#555")}`)}</button>
        <button aria-label="电池">${icon(36, 30, svg`${w("M9 9H31V25H9M31 14H35V20H31M5 2V8M1 8H9V14H1ZM5 14V26H9")}<path d="M13 12H28V22H13Z" fill="#ddd"></path>`)}</button>
        <button>英</button><button class="clock">20:21</button>
        <button aria-label="通知">${icon(36, 36, w("M2 3H34V27H24L18 34L12 27H2Z", "#ccc", 3))}</button>
      </div>
    </div>`;
  }

  private renderControls() {
    const f = "#e4e4e4";
    const dm = (extra: unknown) => icon(44, 44, svg`<path d="M22 41H12Q3 41 3 32V17Q3 9 12 9H30Q39 9 39 17V22M13 2L18 8M29 2L24 8" fill="none" stroke=${f} stroke-width="4" stroke-linecap="round"></path><text class="glyph" x="21" y="33">弹</text>${extra}`);
    return html`<div class="ctl">
      <div class="left">
        <button aria-label="上一个">${icon(34, 34, svg`<path d="M4 2V32" stroke=${f} stroke-width="4" stroke-linecap="round"></path><path d="M30 3Q32 1 32 5V29Q32 33 29 31L8 19Q6 17 8 15Z" fill=${f}></path>`)}</button>
        <button aria-label="播放">${icon(42, 48, svg`<path d="M2 6Q2 0 8 3L38 20Q42 24 38 28L8 45Q2 48 2 42Z" fill=${f}></path>`)}</button>
        <button aria-label="下一个">${icon(34, 34, svg`<path d="M31 2V32" stroke=${f} stroke-width="4" stroke-linecap="round"></path><path d="M5 3Q2 1 2 5V29Q2 33 5 31L26 19Q28 17 26 15Z" fill=${f}></path>`)}</button>
        <span class="time">14:34 / 25:56</span>
      </div>
      <div class="mid-group">
        <button aria-label="关闭弹幕">${dm(svg`<circle cx="34" cy="34" r="11" fill="#000"></circle><circle cx="34" cy="34" r="7" fill="none" stroke=${f} stroke-width="3"></circle><path d="M29 29L39 39" stroke=${f} stroke-width="3"></path>`)}</button>
        <button aria-label="弹幕设置">${dm(svg`<circle cx="33" cy="33" r="12" fill="#000"></circle><path d="M28 25H38L43 33L38 41H28L24 33Z" fill="none" stroke=${f} stroke-width="3"></path><circle cx="33" cy="33" r="3" fill=${f}></circle>`)}</button>
        <form class="send-box">
          <button class="fmt" type="button" aria-label="弹幕样式">${icon(30, 32, svg`<path d="M5 22L13 2H16L25 22M9 15H21" fill="none" stroke="#fff" stroke-width="3"></path><rect x="0" y="26" width="30" height="5" rx="2" fill="#fff"></rect>`)}</button>
          <input type="text" aria-label="弹幕" placeholder="发个友善的弹幕见证当下" />
          <button class="rule" type="button">弹幕礼仪${icon(12, 20, svg`<path d="M2 2L10 10L2 18" fill="none" stroke="#bcbcbc" stroke-width="2"></path>`)}</button>
          <button class="send" type="button">发送</button>
        </form>
      </div>
      <div class="rgt">
        <button class="tx">自动</button><button class="tx">选集</button><button class="sp">2.0x</button>
        <button class="ic" aria-label="字幕">${icon(64, 46, svg`<rect x="2" y="5" width="60" height="34" rx="5" fill=${f}></rect><text class="inv" x="32" y="31">字幕</text><path d="M16 0L58 46" stroke="#000" stroke-width="5"></path><path d="M11 2L52 44" stroke=${f} stroke-width="4" stroke-linecap="round"></path>`)}</button>
        <button class="ic" aria-label="音量">${icon(44, 40, svg`<path d="M2 14Q2 12 4 12H9L20 3Q23 1 23 5V35Q23 39 20 37L9 28H4Q2 28 2 26Z" fill=${f}></path><path d="M28 12Q33 20 28 28M30 3Q50 18 30 37" fill="none" stroke=${f} stroke-width="4" stroke-linecap="round"></path>`)}</button>
        <button class="ic" aria-label="设置">${icon(48, 48, svg`<path d="M18 3H30L33 9L40 7L46 17L42 22V26L46 31L40 41L33 39L30 45H18L15 39L8 41L2 31L6 26V22L2 17L8 7L15 9Z" fill=${f} stroke=${f} stroke-width="2" stroke-linejoin="round"></path><circle cx="24" cy="24" r="7" fill=${f} stroke="#000" stroke-width="5"></circle>`)}</button>
        <button class="ic" aria-label="画中画">${icon(50, 44, svg`<path d="M24 37H8Q3 37 3 32V8Q3 3 8 3H38Q43 3 43 8V22" fill="none" stroke=${f} stroke-width="5"></path><rect x="29" y="27" width="20" height="15" rx="3" fill=${f}></rect>`)}</button>
        <button class="ic" aria-label="功能">${icon(48, 46, svg`<path d="M2 20Q4 8 13 1Q19 4 21 15Q18 17 18 21L3 22ZM46 20Q44 8 35 1Q29 4 27 15Q30 17 30 21L45 22ZM24 28Q29 28 31 34L37 43Q24 48 11 43L18 34Q20 28 24 28Z" fill=${f}></path><circle cx="24" cy="21" r="4" fill=${f}></circle>`)}</button>
      </div>
    </div>`;
  }

  render() {
    return html`<main class="player">
      <header class="top">
        <h1>[6-7] TIM编码器接口</h1>
        <button aria-label="反馈">${icon(42, 44, svg`<path d="M5 2H38Q42 2 42 6V32Q42 36 38 36H10L1 43V6Q1 2 5 2Z" fill="#ccc"></path><text x="21" y="29" text-anchor="middle" font-size="28" font-weight="800" fill="#000">?</text>`)}</button>
      </header>
      ${this.renderRibbon()} ${this.renderWork()} ${this.renderStatus()} ${this.renderTask()}
      <div class="heat"><svg viewBox="25 1584 2832 60" preserveAspectRatio="none" aria-hidden="true"><path d=${heatPath()} fill="rgba(135,213,242,.46)"></path></svg></div>
      <div class="seek"><input type="range" min="0" max="1556" value="874" aria-label="播放进度" /></div>
      <svg class="buddy" width="32" height="36" viewBox="0 0 32 36" aria-hidden="true"><path d="M12 2L17 8L22 4L21 10L29 13L22 18L24 24L19 22L19 34H16L17 22L7 30L12 20L8 19L14 14Z" fill="#fff"></path></svg>
      <div class="sub"><svg viewBox="0 0 1920 110"><text class="line" x="960" y="80">因为此时计数时钟和计数方向都处于编码器接口托管的状态</text></svg></div>
      <svg class="float" width="118" height="112" viewBox="-4 0 118 112" aria-hidden="true"><path d="M32 6L38 20M80 6L73 20" stroke="#fff" stroke-width="8" stroke-linecap="round"></path><rect x="2" y="18" width="107" height="88" rx="22" fill="#fff" fill-opacity=".96"></rect><path d="M40 46Q40 41 45 44L72 60Q76 63 72 66L45 81Q40 84 40 79Z" fill="none" stroke="#c4c4c4" stroke-width="3"></path></svg>
      ${this.renderControls()}
    </main>`;
  }
}
